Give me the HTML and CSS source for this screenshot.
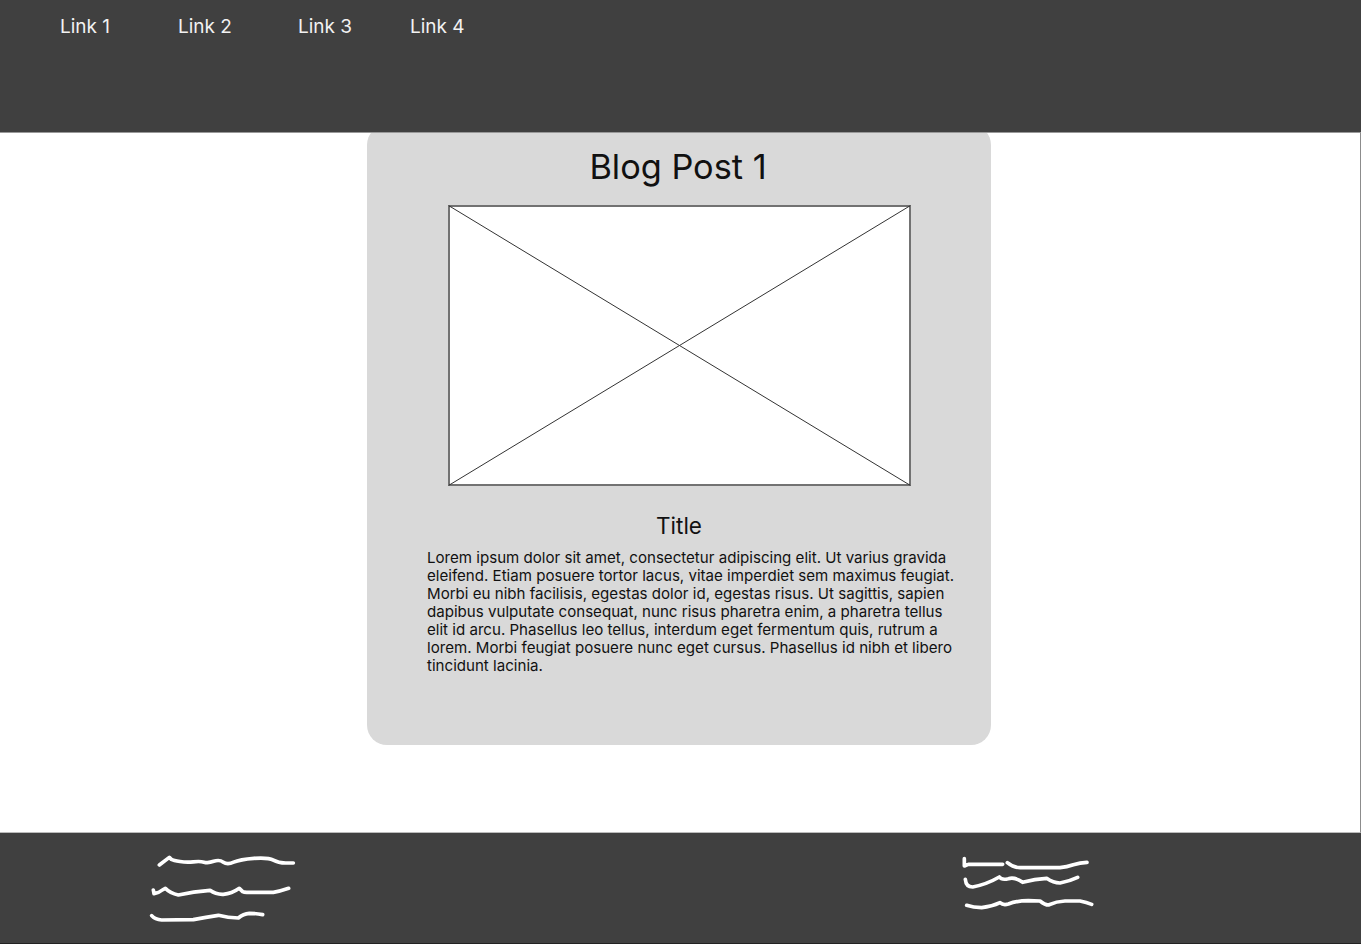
FILE: index.html
```html
<!DOCTYPE html>
<html>
<head>
    <title>Blog Post 1</title>
    <link rel="stylesheet" href="styles.css">
</head>
<body>
    <header class="site-header">
        <nav class="site-nav">
            <a href="#">Link 1</a>
            <a href="#">Link 2</a>
            <a href="#">Link 3</a>
            <a href="#">Link 4</a>
        </nav>
    </header>

    <main class="site-main">
        <article class="post-card">
            <h1 class="post-heading">Blog Post 1</h1>
            <svg class="post-image" viewBox="0 0 463 281" preserveAspectRatio="none">
                <rect class="image-frame" x="1" y="1" width="461" height="279"></rect>
                <line x1="0.5" y1="0.5" x2="462.5" y2="280.5"></line>
                <line x1="462.5" y1="0.5" x2="0.5" y2="280.5"></line>
            </svg>
            <h2 class="post-title">Title</h2>
            <p class="post-text">Lorem ipsum dolor sit amet, consectetur adipiscing elit. Ut varius gravida eleifend. Etiam posuere tortor lacus, vitae imperdiet sem maximus feugiat. Morbi eu nibh facilisis, egestas dolor id, egestas risus. Ut sagittis, sapien dapibus vulputate consequat, nunc risus pharetra enim, a pharetra tellus elit id arcu. Phasellus leo tellus, interdum eget fermentum quis, rutrum a lorem. Morbi feugiat posuere nunc eget cursus. Phasellus id nibh et libero tincidunt lacinia.</p>
        </article>
    </main>

    <footer class="site-footer">
        <!-- scribbles standing in for footer text -->
        <svg class="scribble" viewBox="0 24 570 300">
            <path d="M88 120 L118 97 L124 103 Q130 106 150 109.5 Q170 113 190 110.5 Q210 108 222 111.5 Q235 115 251 109 Q268 103 280 111.5 Q292 120 311 111.5 Q330 103 372 100 Q415 97 430 105.5 Q445 114 467 114 L490 114"></path>
            <path d="M70 195 L72 206 Q88 203 97 195 L106 190 Q120 205 145 210 Q190 199 240 196 Q258 209 280 208 Q305 206 328 190 L338 200 Q342 202 350 202 L430 202 Q450 199 476 190"></path>
            <path d="M65 272 Q75 284 95 285 L190 284 Q228 276 265 271 Q295 279 325 279 Q340 266 358 265 Q378 265 398 269"></path>
        </svg>
        <svg class="scribble" viewBox="0 24 570 300">
            <path d="M73 101 L73 123 L85 118 L188 118"></path>
            <path d="M202 113 Q220 128 240 128 L360 128 Q380 126 400 119 Q420 113 441 112"></path>
            <path d="M76 163 Q78 186 98 186 Q140 178 178 156 Q185 166 205 161 Q225 155 248 172 Q285 161 320 160 Q340 174 360 174 Q390 168 413 157"></path>
            <path d="M80 241 Q100 248 125 248 Q155 245 180 233 Q190 242 205 237 Q230 227 265 227 L300 228 Q315 240 325 240 Q350 229 375 228 L420 228 Q440 232 455 238"></path>
        </svg>
    </footer>
</body>
</html>
```

FILE: styles.css
```css
body {
    font-family: Inter, "Liberation Sans", sans-serif;
    margin: 0;
    padding: 0;
    background-color: #fff;
    color: #111;
}

.site-header {
    position: relative;
    z-index: 1;
    height: 132px;
    background-color: #404040;
    border-bottom: 1px solid #999;
}

.site-nav {
    display: grid;
    grid-template-columns: 118px 120px 112px auto;
    padding: 16px 0 0 60px;
}

.site-nav a {
    color: #f2f2f2;
    font-size: 19px;
    line-height: 22px;
    text-decoration: none;
}

.site-main {
    display: flow-root;
    height: 699px;
    background-color: #fff;
    border-right: 1px solid #8c8c8c;
    border-bottom: 1px solid #bbb;
}

.post-card {
    display: flex;
    flex-direction: column;
    align-items: center;
    box-sizing: border-box;
    width: 624px;
    height: 620px;
    margin: -8px 0 0 367px;
    padding-top: 22px;
    background-color: #d9d9d9;
    border-radius: 20px;
}

.post-heading {
    margin: 0;
    padding-right: 2px;
    font-size: 34.3px;
    font-weight: 400;
    line-height: 39px;
}

.post-image {
    display: block;
    width: 463px;
    height: 281px;
    margin-top: 19px;
    background-color: #fff;
}

.post-image line {
    stroke: #333;
    stroke-width: 1;
}

.image-frame {
    fill: none;
    stroke: #444;
    stroke-width: 1.5;
}

.post-title {
    margin: 28px 0 0;
    font-size: 22.5px;
    font-weight: 400;
    line-height: 24px;
}

.post-text {
    align-self: flex-start;
    width: 534px;
    margin: 11px 0 0 60px;
    font-size: 15.1px;
    line-height: 18px;
}

.site-footer {
    display: flex;
    gap: 620px;
    height: 110px;
    padding-left: 130px;
    background-color: #404040;
    border-bottom: 1px solid #222;
}

.scribble {
    display: block;
    width: 190px;
    height: 100px;
}

.scribble path {
    fill: none;
    stroke: #fff;
    stroke-width: 11;
    stroke-linecap: round;
    stroke-linejoin: round;
}
```
